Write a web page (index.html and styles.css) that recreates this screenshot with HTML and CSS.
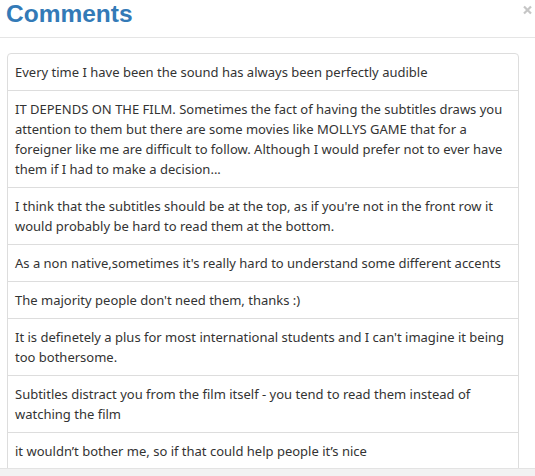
FILE: index.html
```html
<!DOCTYPE html>
<html>
<head>
<meta charset="utf-8">
<link rel="stylesheet" href="styles.css">
</head>
<body>
<div class="modal">
  <div class="modal-header">
    <h2 class="title">Comments</h2>
    <svg class="close" width="9" height="10" viewBox="0 0 9 10" aria-label="close">
      <path d="M1 1.5 L8 8.5 M8 1.5 L1 8.5" stroke="#c6c6c6" stroke-width="2.2" stroke-linecap="butt"/>
    </svg>
  </div>
  <div class="modal-body">
    <ul class="list">
      <li class="item">Every time I have been the sound has always been perfectly audible</li>
      <li class="item">IT DEPENDS ON THE FILM. Sometimes the fact of having the subtitles draws you<br>attention to them but there are some movies like MOLLYS GAME that for a<br>foreigner like me are difficult to follow. Although I would prefer not to ever have<br>them if I had to make a decision...</li>
      <li class="item">I think that the subtitles should be at the top, as if you're not in the front row it<br>would probably be hard to read them at the bottom.</li>
      <li class="item">As a non native,sometimes it's really hard to understand some different accents</li>
      <li class="item">The majority people don't need them, thanks :)</li>
      <li class="item">It is definetely a plus for most international students and I can't imagine it being<br>too bothersome.</li>
      <li class="item">Subtitles distract you from the film itself - you tend to read them instead of<br>watching the film</li>
      <li class="item">it wouldn’t bother me, so if that could help people it’s nice</li>
    </ul>
  </div>
  <div class="modal-footer"></div>
</div>
</body>
</html>
```

FILE: styles.css
```css
html, body {
  margin: 0;
  padding: 0;
  background: #fff;
}
.modal {
  width: 535px;
  height: 476px;
  display: flex;
  flex-direction: column;
  overflow: hidden;
}
.modal-header {
  height: 37px;
  border-bottom: 1px solid #e5e5e5;
  display: flex;
  justify-content: space-between;
  align-items: flex-start;
  flex: none;
}
.title {
  margin: 0;
  padding: 0 0 0 6px;
  font-family: "Liberation Sans", Arial, sans-serif;
  font-weight: bold;
  font-size: 24.5px;
  line-height: 28px;
  color: #337ab7;
}
.close {
  display: block;
  margin: 5px 3px 0 0;
}
.modal-body {
  flex: 1;
  overflow: hidden;
  padding: 15px 0 0 7px;
}
.list {
  list-style: none;
  margin: 0;
  padding: 0;
  width: 512px;
  font-family: "Noto Sans", "Open Sans", sans-serif;
  font-size: 13px;
  line-height: 20px;
  color: #333;
}
.item {
  border: 1px solid #ddd;
  margin-bottom: -1px;
  padding: 8px 7px;
  white-space: nowrap;
}
.item:first-child {
  border-top-left-radius: 4px;
  border-top-right-radius: 4px;
}
.item:last-child {
  padding-bottom: 12px;
}
.modal-footer {
  flex: none;
  height: 7px;
  background: #f2f2f2;
  border-top: 1px solid #e3e3e3;
}
```
